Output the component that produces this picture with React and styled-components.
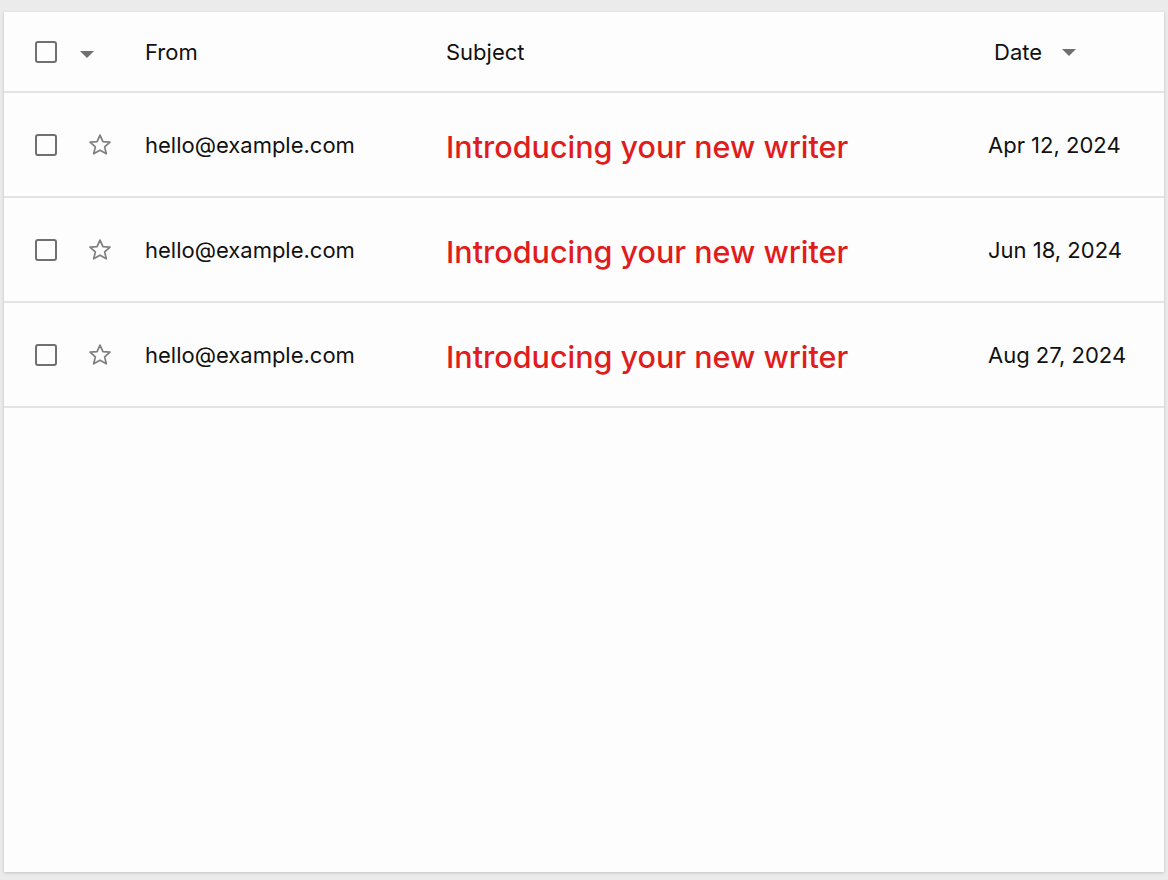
import React from "react";
import styled, { createGlobalStyle } from "styled-components";

const Global = createGlobalStyle`
  html, body { margin: 0; padding: 0; background: #ebebeb; }
  body { font-family: Inter, "Liberation Sans", Arial, sans-serif; }
`;

const Page = styled.div`
  width: 1168px;
  height: 880px;
  box-sizing: border-box;
  padding: 12px 4px 8px 4px;
  display: flex;
`;

const Card = styled.div`
  flex: 1;
  background: #fdfdfd;
  box-shadow: 0 1px 3px rgba(0,0,0,0.18);
  display: flex;
  flex-direction: column;
`;

const Row = styled.div`
  display: grid;
  grid-template-columns: 45px 65px 301px 542px 1fr;
  align-items: center;
  height: ${p => p.$h}px;
  padding-left: 31px;
  padding-top: 1px;
  border-bottom: 2px solid #e3e3e3;
  box-sizing: border-box;
`;

const Box = styled.span`
  width: 18px;
  height: 18px;
  border: 2px solid #707070;
  border-radius: 3px;
  display: block;
`;

const Caret = styled.span`
  width: 0;
  height: 0;
  border-left: 7px solid transparent;
  border-right: 7px solid transparent;
  border-top: 7px solid #707070;
  display: inline-block;
  margin-left: ${p => p.$ml || 0}px;
  margin-top: 1px;
`;

const HeadText = styled.span`
  font-size: 22px;
  color: #111;
  display: flex;
  align-items: center;
  margin-left: ${p => p.$ml || 0}px;
`;

const From = styled.span`
  font-size: 22px;
  color: #111;
`;

const Subject = styled.span`
  font-size: 30.5px;
  font-weight: 500;
  color: #e01c1c;
  padding-top: 2px;
`;

const DateText = styled.span`
  font-size: 22px;
  color: #111;
`;

const StarWrap = styled.span`
  display: flex;
  margin-left: 7px;
`;

const Star = () => (
  <StarWrap>
    <svg width="26" height="26" viewBox="0 0 24 24" fill="none" stroke="#808080" strokeWidth="1.6" strokeLinejoin="round">
      <path d="M12 2.8l2.7 6 6.5.6-4.9 4.3 1.5 6.4L12 16.8l-5.8 3.3 1.5-6.4-4.9-4.3 6.5-.6z" />
    </svg>
  </StarWrap>
);

const mails = [
  { from: "hello@example.com", subject: "Introducing your new writer", date: "Apr 12, 2024" },
  { from: "hello@example.com", subject: "Introducing your new writer", date: "Jun 18, 2024" },
  { from: "hello@example.com", subject: "Introducing your new writer", date: "Aug 27, 2024" },
];

export default function App() {
  return (
    <>
      <Global />
      <Page>
        <Card>
          <Row $h={81}>
            <Box />
            <span><Caret /></span>
            <HeadText>From</HeadText>
            <HeadText>Subject</HeadText>
            <HeadText $ml={6}>Date<Caret $ml={20} /></HeadText>
          </Row>
          {mails.map((m, i) => (
            <Row key={i} $h={105}>
              <Box />
              <Star />
              <From>{m.from}</From>
              <Subject>{m.subject}</Subject>
              <DateText>{m.date}</DateText>
            </Row>
          ))}
        </Card>
      </Page>
    </>
  );
}
